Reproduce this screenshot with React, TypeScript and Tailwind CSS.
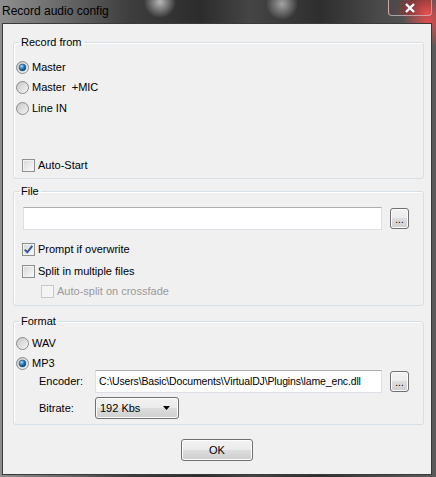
import React from 'react';

const btnFace =
  "border border-[#707070] rounded-[3px] bg-[linear-gradient(#f2f2f2,#ebebeb_50%,#dddddd_50%,#cfcfcf)] shadow-[inset_0_0_0_1px_#fcfcfc]";

function Radio({ checked }: { checked?: boolean }) {
  return (
    <svg width="13" height="13" viewBox="0 0 13 13" className="shrink-0">
      <defs>
        <linearGradient id="rb" x1="0" y1="0" x2="1" y2="1">
          <stop offset="0" stopColor="#c4c4c4" />
          <stop offset="1" stopColor="#f8f8f8" />
        </linearGradient>
        <radialGradient id="rd" cx="0.35" cy="0.3" r="0.8">
          <stop offset="0" stopColor="#a8e0ff" />
          <stop offset="0.5" stopColor="#2a78b4" />
          <stop offset="1" stopColor="#0b2f56" />
        </radialGradient>
      </defs>
      <circle cx="6.5" cy="6.5" r="6" fill="url(#rb)" stroke="#8a8c8e" />
      {checked && <circle cx="6.5" cy="6.5" r="3.4" fill="url(#rd)" stroke="#1d4f7c" strokeWidth="0.6" />}
    </svg>
  );
}

function Check({ checked, disabled }: { checked?: boolean; disabled?: boolean }) {
  return (
    <span
      className={
        disabled
          ? "w-[13px] h-[13px] shrink-0 border border-[#c8c8c8] bg-[#f4f4f4]"
          : "w-[13px] h-[13px] shrink-0 border border-[#8e8f8f] bg-[linear-gradient(135deg,#d6d6d6,#fbfbfb)] shadow-[inset_0_0_0_1px_#f2f2f2] flex items-center justify-center"
      }
    >
      {checked && (
        <svg width="11" height="11" viewBox="0 0 11 11">
          <path d="M1.8 5.6 L4.3 8.3 L9.3 1.8" fill="none" stroke="#3d5596" strokeWidth="2" />
        </svg>
      )}
    </span>
  );
}

function Browse() {
  return (
    <button className={`w-[19px] h-[21px] ml-[8px] ${btnFace} flex items-end justify-center pb-[3px] text-[10px] leading-[10px]`}>
      ...
    </button>
  );
}

export default function App() {
  return (
    <div className="w-[436px] h-[477px] overflow-hidden text-black font-['Liberation_Sans',Arial,sans-serif] bg-[radial-gradient(circle_at_160px_2px,#b8b8b8_0,transparent_16px),radial-gradient(circle_at_282px_4px,#a4a4a4_0,transparent_16px),radial-gradient(circle_at_428px_22px,#e24a4a_0,transparent_26px),linear-gradient(90deg,#8e8e8e_0,#6a6a6a_60px,#3d3d3d_130px,#2c2c2c_200px,#454545_250px,#2e2e2e_320px,#4a4a4a_380px,#5a5a5a_436px)]">
      {/* Title bar */}
      <div className="h-[23px] flex items-start">
        <span className="text-[12px] leading-[14px] pl-[2px] pt-[4px]">Record audio config</span>
        <div className="ml-auto mr-[4px] w-[44px] h-[16px] border border-t-0 border-white/50 rounded-b-[4px] bg-[radial-gradient(circle_at_38px_14px,#e85050_0,#8a3a3a_18px,#4a4a4a_34px)] flex items-center justify-center">
          <svg width="12" height="10" viewBox="0 0 12 10">
            <path d="M2 1 L10 9 M10 1 L2 9" stroke="#fff" strokeWidth="2.4" />
          </svg>
        </div>
      </div>

      {/* Client area */}
      <div className="ml-[2px] w-[430px] h-[452px] border border-[#3a3a3a] bg-[#f0f0f0] text-[11px] flex flex-col">
        {/* Record from */}
        <fieldset className="mt-[11px] ml-[10px] w-[411px] border border-[#d5dfe5] rounded-[3px] shadow-[inset_1px_1px_0_#fff] pb-[3px]">
          <legend className="ml-[5px] px-[2px] leading-[14px]">Record from</legend>
          <div className="flex flex-col pl-[2px] mt-[8px]">
            <label className="h-[20px] flex items-center gap-[3px]"><Radio checked />Master</label>
            <label className="h-[20px] flex items-center gap-[3px]"><Radio />Master&nbsp; +MIC</label>
            <label className="h-[20px] mt-[1px] flex items-center gap-[3px]"><Radio />Line IN</label>
            <label className="h-[20px] mt-[37px] ml-[6px] flex items-center gap-[3px]"><Check />Auto-Start</label>
          </div>
        </fieldset>

        {/* File */}
        <fieldset className="mt-[5px] ml-[10px] w-[411px] border border-[#d5dfe5] rounded-[3px] shadow-[inset_1px_1px_0_#fff] pb-[4px]">
          <legend className="ml-[5px] px-[2px] leading-[14px]">File</legend>
          <div className="flex flex-col pl-[8px] mt-[9px]">
            <div className="flex items-center ml-[1px]">
              <div className="w-[359px] h-[23px] bg-white border border-[#dcdfe6] border-t-[#abadb3]" />
              <Browse />
            </div>
            <label className="h-[20px] mt-[9px] flex items-center gap-[3px]"><Check checked />Prompt if overwrite</label>
            <label className="h-[20px] mt-[2px] flex items-center gap-[3px]"><Check />Split in multiple files</label>
            <label className="h-[20px] ml-[19px] flex items-center gap-[3px] text-[#9a9a9a]"><Check disabled />Auto-split on crossfade</label>
          </div>
        </fieldset>

        {/* Format */}
        <fieldset className="mt-[8px] ml-[10px] w-[411px] border border-[#d5dfe5] rounded-[3px] shadow-[inset_1px_1px_0_#fff] pb-[5px]">
          <legend className="ml-[5px] px-[2px] leading-[14px]">Format</legend>
          <div className="flex flex-col pl-[2px] mt-[8px]">
            <label className="h-[14px] flex items-center gap-[3px]"><Radio />WAV</label>
            <label className="h-[14px] mt-[6px] flex items-center gap-[3px]"><Radio checked />MP3</label>
            <div className="flex items-center ml-[23px]">
              <span className="w-[56px]">Encoder:</span>
              <div className="w-[287px] h-[23px] bg-white border border-[#dcdfe6] border-t-[#abadb3] flex items-center pl-[3px] whitespace-nowrap overflow-hidden text-[10.5px] tracking-[-0.15px]">
                C:\Users\Basic\Documents\VirtualDJ\Plugins\lame_enc.dll
              </div>
              <Browse />
            </div>
            <div className="flex items-center ml-[23px] mt-[4px]">
              <span className="w-[56px]">Bitrate:</span>
              <div className={`w-[84px] h-[22px] ${btnFace} flex items-center pl-[4px] pr-[8px]`}>
                <span>192 Kbs</span>
                <svg className="ml-auto" width="7" height="4" viewBox="0 0 7 4">
                  <path d="M0 0 H7 L3.5 4 Z" fill="#000" />
                </svg>
              </div>
            </div>
          </div>
        </fieldset>

        <div className="mt-[14px] flex justify-center">
          <button className={`w-[72px] h-[22px] ${btnFace} text-[11px]`}>OK</button>
        </div>
      </div>
    </div>
  );
}
